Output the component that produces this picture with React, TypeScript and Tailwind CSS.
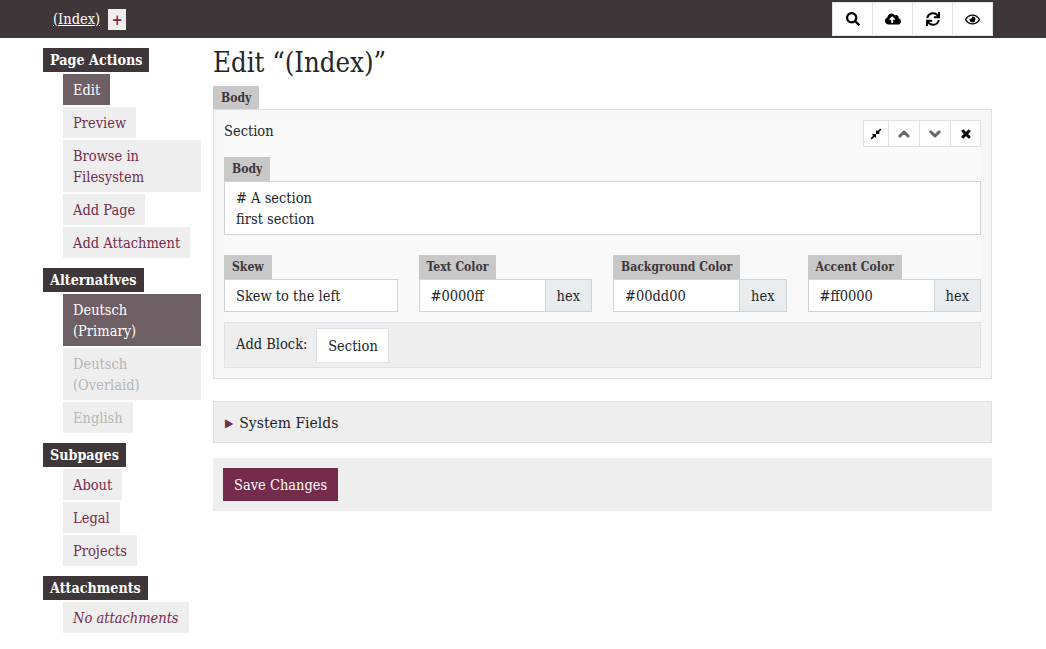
import {
  FaChevronDown,
  FaChevronUp,
  FaCloudUploadAlt,
  FaCompressAlt,
  FaRegEye,
  FaSearch,
  FaSync,
  FaTimes,
} from "react-icons/fa";

const font = { fontFamily: '"DejaVu Serif Condensed", "DejaVu Serif", serif' };

function SideHeading({ children }: { children: string }) {
  return (
    <h3 className="h-[24px] w-fit bg-[#3e3639] px-[7px] pt-px text-[14.2px] leading-[23px] font-bold text-white">
      {children}
    </h3>
  );
}

function SideItem({
  label,
  active,
  muted,
  italic,
}: {
  label: string;
  active?: boolean;
  muted?: boolean;
  italic?: boolean;
}) {
  let color = "bg-[#eeeeee] text-[#752b4b]";
  if (active) color = "bg-[#6e5f65] text-white";
  if (muted) color = "bg-[#eeeeee] text-[#b5b5b5]";
  return (
    <li className={`w-fit px-[10px] pt-[6px] pb-[4px] ${color} ${italic ? "italic" : ""}`}>{label}</li>
  );
}

function SideGroup({ title, children }: { title: string; children: React.ReactNode }) {
  return (
    <div className="mb-[10px]">
      <SideHeading>{title}</SideHeading>
      <ul className="mt-[2px] ml-[20px] flex flex-col gap-[2px]">{children}</ul>
    </div>
  );
}

function Tab({ children }: { children: string }) {
  return (
    <div className="h-[24px] w-fit bg-[#c8c8c8] px-[8px] text-[12.1px] leading-[24px] font-bold text-[#3e3639]">
      {children}
    </div>
  );
}

function TextField({ label, value }: { label: string; value: string }) {
  return (
    <div>
      <Tab>{label}</Tab>
      <div className="h-[33px] border border-[#ced4da] bg-white px-[11px] leading-[33px]">{value}</div>
    </div>
  );
}

function HexField({ label, value }: { label: string; value: string }) {
  return (
    <div>
      <Tab>{label}</Tab>
      <div className="flex h-[33px]">
        <div className="min-w-0 flex-1 border border-[#ced4da] bg-white px-[11px] leading-[33px]">{value}</div>
        <div className="-ml-px border border-[#ced4da] bg-[#e9ecef] px-[11px] leading-[33px]">hex</div>
      </div>
    </div>
  );
}

export default function App() {
  return (
    <div className="min-h-[649px] bg-white text-[14.5px] leading-[21px] text-[#212529]" style={font}>
      <header className="flex h-[38px] items-center justify-between bg-[#3e3639] pr-[53px] pl-[53px]">
        <div className="flex items-center gap-[8px]">
          <a className="text-white underline">(Index)</a>
          <span className="flex h-[21px] w-[18px] items-center justify-center bg-[#eeeeee] font-bold text-[#752b4b]">
            +
          </span>
        </div>
        <div className="flex h-[34px] border border-[#dee2e6] bg-white text-[14px] text-black">
          <div className="flex w-[39px] items-center justify-center"><FaSearch /></div>
          <div className="flex w-[40px] items-center justify-center border-l border-[#dee2e6]"><FaCloudUploadAlt className="text-[16px]" /></div>
          <div className="flex w-[40px] items-center justify-center border-l border-[#dee2e6]"><FaSync /></div>
          <div className="flex w-[40px] items-center justify-center border-l border-[#dee2e6]"><FaRegEye className="text-[15px]" /></div>
        </div>
      </header>

      <div className="flex pt-[10px] pl-[43px]">
        <aside className="w-[158px] shrink-0">
          <SideGroup title="Page Actions">
            <SideItem label="Edit" active />
            <SideItem label="Preview" />
            <li className="w-full bg-[#eeeeee] px-[10px] pt-[6px] pb-[4px] text-[#752b4b]">Browse in Filesystem</li>
            <SideItem label="Add Page" />
            <SideItem label="Add Attachment" />
          </SideGroup>
          <SideGroup title="Alternatives">
            <li className="w-full bg-[#6e5f65] px-[10px] pt-[6px] pb-[4px] text-white">Deutsch (Primary)</li>
            <li className="w-full bg-[#eeeeee] px-[10px] pt-[6px] pb-[4px] text-[#b5b5b5]">Deutsch (Overlaid)</li>
            <SideItem label="English" muted />
          </SideGroup>
          <SideGroup title="Subpages">
            <SideItem label="About" />
            <SideItem label="Legal" />
            <SideItem label="Projects" />
          </SideGroup>
          <SideGroup title="Attachments">
            <SideItem label="No attachments" italic />
          </SideGroup>
        </aside>

        <main className="ml-[12px] w-[779px]">
          <h1 className="h-[38px] text-[27.3px] leading-[30px] font-normal">Edit “(Index)”</h1>
          <Tab>Body</Tab>
          <section className="-mt-px h-[270px] border border-[#dee2e6] bg-[#f6f6f6] p-[10px]">
            <div className="h-full bg-[#f9f9f9]">
              <div className="flex h-[27px] items-start justify-between">
                <span className="pt-px">Section</span>
                <div className="flex h-[27px] border border-[#dee2e6] bg-white text-[12px]">
                  <div className="flex w-[24px] items-center justify-center text-black"><FaCompressAlt /></div>
                  <div className="flex w-[31px] items-center justify-center border-l border-[#dee2e6] text-[#666666]"><FaChevronUp stroke="currentColor" strokeWidth={50} /></div>
                  <div className="flex w-[31px] items-center justify-center border-l border-[#dee2e6] text-[#666666]"><FaChevronDown stroke="currentColor" strokeWidth={50} /></div>
                  <div className="flex w-[30px] items-center justify-center border-l border-[#dee2e6] text-black"><FaTimes stroke="currentColor" strokeWidth={40} /></div>
                </div>
              </div>
              <div className="mt-[10px]">
                <Tab>Body</Tab>
                <div className="h-[54px] border border-[#ced4da] bg-white px-[11px] pt-[6px]">
                  # A section
                  <br />
                  first section
                </div>
              </div>
              <div className="mt-[20px] grid grid-cols-4 gap-[21px]">
                <TextField label="Skew" value="Skew to the left" />
                <HexField label="Text Color" value="#0000ff" />
                <HexField label="Background Color" value="#00dd00" />
                <HexField label="Accent Color" value="#ff0000" />
              </div>
              <div className="mt-[10px] flex h-[46px] items-center gap-[9px] border border-[#dee2e6] bg-[#eeeeee] px-[11px]">
                <span className="-mt-[2px]">Add Block:</span>
                <span className="w-[73px] border border-[#dee2e6] bg-white pt-[7px] pb-[5px] text-center">Section</span>
              </div>
            </div>
          </section>

          <div className="mt-[22px] flex h-[42px] items-center gap-[6px] border border-[#dee2e6] bg-[#eeeeee] px-[11px] pt-[2px]">
            <span className="text-[12px] text-[#752b4b]">▶</span>
            <span className="text-[15.5px] text-[#212529]">System Fields</span>
          </div>

          <div className="mt-[15px] h-[53px] bg-[#eeeeee] px-[10px] pt-[10px]">
            <button className="h-[33px] bg-[#752b4b] px-[11px] pt-px text-white">Save Changes</button>
          </div>
        </main>
      </div>
    </div>
  );
}
